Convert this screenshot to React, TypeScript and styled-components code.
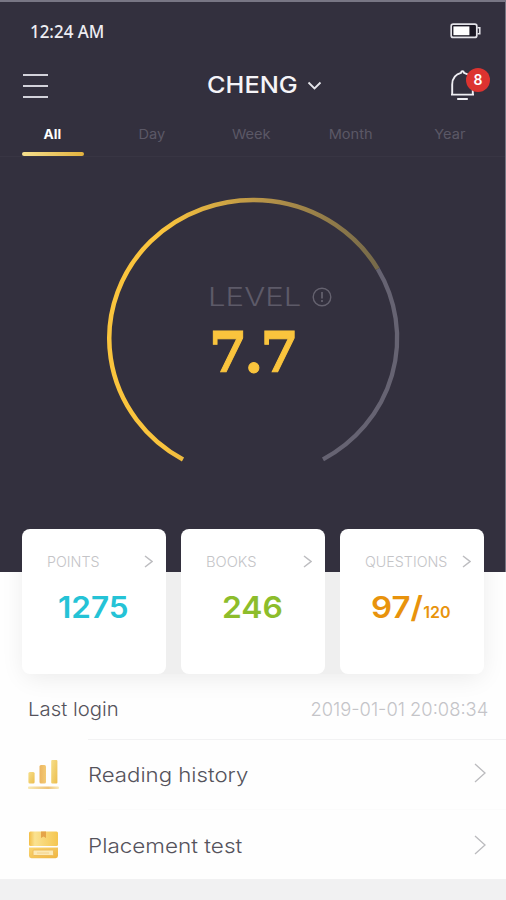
import React from 'react';
import styled, { createGlobalStyle } from 'styled-components';

const GlobalStyle = createGlobalStyle`
  * { box-sizing: border-box; }
  body { margin: 0; background: #f1f1f2; }
`;

const Screen = styled.div`
  width: 506px;
  height: 900px;
  overflow: hidden;
  background: #f1f1f2;
  font-family: Inter, "Liberation Sans", sans-serif;
`;

const Wide = styled.span<{ $x?: number; $origin?: string }>`
  display: inline-block;
  white-space: nowrap;
  transform: scaleX(${p => p.$x ?? 1});
  transform-origin: ${p => p.$origin ?? 'left'} center;
`;

const Hero = styled.header`
  height: 572px;
  background: #33303e;
  border-top: 2px solid #787684;
  border-right: 1px solid #777582;
`;

const StatusBar = styled.div`
  height: 58px;
  padding: 0 24px 0 30px;
  display: flex;
  align-items: center;
  justify-content: space-between;
  color: #eeedf2;
  font: 500 18px/24px "Noto Sans", sans-serif;
`;

const TitleBar = styled.div`
  height: 51px;
  padding: 0 15px 0 23px;
  display: grid;
  grid-template-columns: 60px 1fr 41px;
  align-items: center;
`;

const MenuButton = styled.button`
  width: 25px;
  height: 24px;
  padding: 0;
  border: 0;
  background: none;
  display: flex;
  flex-direction: column;
  justify-content: space-between;
`;

const MenuLine = styled.span`
  height: 2px;
  background: #d3d2da;
`;

const UserPicker = styled.div`
  display: flex;
  align-items: center;
  padding-left: 124px;
  color: #f5f4f8;
  font-size: 23px;
  line-height: 28px;
  font-weight: 500;
`;

const UserName = styled.span`
  width: 100px;
  margin-top: -2px;
`;

const Bell = styled.div`
  position: relative;
  width: 41px;
  height: 38px;
`;

const Badge = styled.span`
  position: absolute;
  top: 1px;
  right: 0;
  width: 24px;
  height: 24px;
  border-radius: 50%;
  background: #dc3330;
  color: #fff;
  font-size: 14px;
  line-height: 24px;
  font-weight: 600;
  text-align: center;
`;

const Tabs = styled.nav`
  height: 46px;
  padding: 0 5px 0 3px;
  display: grid;
  grid-template-columns: repeat(5, 1fr);
  border-bottom: 1px solid #383543;
`;

const Tab = styled.div<{ $active?: boolean }>`
  display: flex;
  flex-direction: column;
  align-items: center;
  justify-content: space-between;
  padding: 13px 0 0;
  font-size: 13px;
  line-height: 20px;
  font-weight: ${p => (p.$active ? 700 : 400)};
  color: ${p => (p.$active ? '#fff' : '#5b5866')};
`;

const TabMarker = styled.span`
  width: 62px;
  height: 4px;
  border-radius: 2px;
  background: linear-gradient(90deg, #f6e08e, #e3b23e);
`;

const Gauge = styled.section`
  display: grid;
  justify-items: center;
  padding: 35px 0 0 1px;

  > * { grid-area: 1 / 1; }
`;

const GaugeText = styled.div`
  width: 130px;
  padding-top: 89px;
`;

const LevelRow = styled.div`
  display: flex;
  align-items: center;
  margin-left: 20px;
  color: #5d5a68;
  font-size: 26px;
  line-height: 32px;
  font-weight: 300;

  svg { flex: none; }
`;

const LevelName = styled.span`
  width: 104px;
  flex: none;
`;

const LevelValue = styled.div`
  margin: 7px 0 0 21px;
  color: #fac43d;
  font: 700 56px/64px "DejaVu Serif", serif;
  letter-spacing: -3px;
  -webkit-text-stroke: 1px #fac43d;
`;

const Sheet = styled.main`
  display: flow-root;
  height: 307px;
  background: #fefefe;
`;

const Cards = styled.section`
  position: relative;
  display: grid;
  grid-template-columns: repeat(3, 144px);
  gap: 15px;
  padding-left: 22px;
`;

const Card = styled.article`
  height: 145px;
  padding: 21px 13px 0 25px;
  border-radius: 8px;
  background: #fff;
`;

/* Soft halo that only falls on the light sheet below the header. */
const CardShade = styled.div`
  position: absolute;
  inset: 43px 0 -40px 0;
  overflow: hidden;
  z-index: -1;

  &::before {
    content: "";
    position: absolute;
    left: 26px;
    top: -40px;
    width: 455px;
    height: 142px;
    border-radius: 8px;
    box-shadow: 0 2px 24px 2px rgba(0, 0, 0, 0.08);
    background: #efefef;
  }
`;

const CardsLayer = styled.div`
  position: relative;
  z-index: 0;
  margin-top: -43px;
`;

const CardHead = styled.div`
  height: 22px;
  display: flex;
  align-items: center;
  justify-content: space-between;
  color: #c4c4c7;
  font-size: 14px;
  font-weight: 300;
`;

const CardValue = styled.div<{ $color: string; $indent: number }>`
  margin: 15px 0 0 ${p => p.$indent}px;
  color: ${p => p.$color};
  display: flex;
  align-items: baseline;
  font-size: 30px;
  line-height: 40px;
  font-weight: 600;
`;

const Total = styled.span`
  margin-left: 5px;
  font-size: 16px;
`;

const LoginRow = styled.div`
  height: 65px;
  padding: 5px 18px 0 28px;
  display: flex;
  align-items: center;
  justify-content: space-between;
  font-size: 19px;
  font-weight: 300;
  color: #55535c;
`;

const LoginTime = styled.time`
  color: #c4c4c8;
`;

const Row = styled.div`
  height: 70px;
  display: grid;
  grid-template-columns: 60px 1fr;
  padding-left: 28px;
  align-items: center;
`;

const LastRow = styled(Row)`
  > svg { margin-top: 2px; }
`;

const RowBody = styled.div<{ $line: string; $drop?: number }>`
  height: 100%;
  padding: ${p => p.$drop ?? 0}px 20px 0 0;
  border-top: 1px solid ${p => p.$line};
  display: flex;
  align-items: center;
  justify-content: space-between;
  font-size: 20px;
  font-weight: 300;
  color: #55535c;

  svg { margin-top: -3px; }
`;

const BatteryIcon = () => (
  <svg width="31" height="16" viewBox="0 0 31 16">
    <rect x="1.2" y="1.2" width="25.6" height="13.2" rx="2" fill="#1b1824" stroke="#e4e3e9" strokeWidth="1.7" />
    <rect x="3.4" y="3.4" width="16" height="8.8" fill="#fff" />
    <path d="M27.5 4.8h2.3v6h-2.3" fill="none" stroke="#e4e3e9" strokeWidth="1.5" />
  </svg>
);

const BellIcon = () => (
  <svg width="28" height="34" viewBox="0 0 28 34">
    <path d="M2 27.6H25M3.2 27V17.5C3.2 11 7.2 7 12 5.8C12.3 3.7 14.7 3.7 15 5.8C19.8 7 23.8 11 23.8 17.5V27M8.2 32H18.8" fill="none" stroke="#efeef3" strokeWidth="1.9" />
  </svg>
);

const Chevron = ({ w, h, color, stroke = 1.5 }: { w: number; h: number; color: string; stroke?: number }) => (
  <svg width={w} height={h} viewBox={`0 0 ${w} ${h}`}>
    <path d={`M1 1L${w - 1} ${h / 2}L1 ${h - 1}`} fill="none" stroke={color} strokeWidth={stroke} />
  </svg>
);

const ChartIcon = () => (
  <svg width="32" height="32" viewBox="0 0 32 32">
    <defs>
      <linearGradient id="barA" x1="0" x2="1" y2="1"><stop stopColor="#f6df8b" /><stop offset="1" stopColor="#ecbd4d" /></linearGradient>
      <linearGradient id="barB" x1="0" x2="1"><stop stopColor="#ecb560" /><stop offset="1" stopColor="#f3ca75" /></linearGradient>
      <linearGradient id="base"><stop stopColor="#f8e9b2" /><stop offset=".65" stopColor="#efc277" /><stop offset="1" stopColor="#f9eab9" /></linearGradient>
    </defs>
    <rect x="0.4" y="14" width="6.2" height="11.6" rx="1.5" fill="url(#barA)" />
    <rect x="11.5" y="7" width="6.5" height="18.6" rx="1.5" fill="url(#barB)" />
    <rect x="23.2" y="2" width="6.2" height="23.6" rx="1" fill="url(#barA)" />
    <rect x="0" y="28.6" width="31" height="2.3" rx="1" fill="url(#base)" />
  </svg>
);

const BoxIcon = () => (
  <svg width="32" height="32" viewBox="0 0 32 32">
    <defs>
      <linearGradient id="lid"><stop stopColor="#f3bd45" /><stop offset=".2" stopColor="#fae291" /><stop offset="1" stopColor="#f5c64f" /></linearGradient>
      <linearGradient id="crate" x1="0" y1="0" x2="1" y2="1"><stop stopColor="#f9d572" /><stop offset="1" stopColor="#efb43f" /></linearGradient>
    </defs>
    <rect x="1" y="2.5" width="29" height="14.5" rx="1.5" fill="url(#lid)" />
    <path d="M13 2.5h5v6.5l-2.5-1.4L13 9z" fill="#e5a449" />
    <path d="M1 18.5h29v8.3q0 2.4-2.4 2.4H3.4Q1 29.2 1 26.8z" fill="url(#crate)" />
    <rect x="5" y="21" width="20.5" height="5.5" rx="1" fill="#fbe9b5" stroke="#efbd5c" />
    <path d="M9 24h12" stroke="#f4d28a" />
  </svg>
);

const GaugeArc = () => (
  <svg width="300" height="270" viewBox="0 0 300 270">
    <defs>
      <linearGradient id="arc" gradientUnits="userSpaceOnUse" x1="60" y1="80" x2="276" y2="80">
        <stop stopColor="#fac43d" />
        <stop offset=".45" stopColor="#b89448" />
        <stop offset="1" stopColor="#75694a" />
      </linearGradient>
    </defs>
    <path d="M274.7 76.8A144 138.5 0 0 1 220 267.4" fill="none" stroke="#666372" strokeWidth="4.3" />
    <path d="M80 267.4A144 138.5 0 1 1 274.7 76.8" fill="none" stroke="url(#arc)" strokeWidth="4.5" />
  </svg>
);

const InfoIcon = () => (
  <svg width="20" height="20" viewBox="0 0 20 20" fill="none" stroke="#65626f" strokeWidth="1.4">
    <circle cx="10" cy="10" r="8.8" />
    <path d="M10 5v6.5M10 13v2" strokeWidth="1.7" />
  </svg>
);

const tabs: [string, number][] = [['All', 1.05], ['Day', 1.12], ['Week', 1.12], ['Month', 1.12], ['Year', 1.12]];

const stats = [
  { label: 'POINTS', lx: 1.02, value: '1275', vx: 1.05, color: '#25c3d6', indent: 11 },
  { label: 'BOOKS', lx: 1.05, value: '246', vx: 1.06, color: '#8dbd2b', indent: 16 },
  { label: 'QUESTIONS', lx: 1.02, value: '97/', vx: 1.1, color: '#e8930c', indent: 6, total: '120' },
];

export default function App() {
  return (
    <Screen>
      <GlobalStyle />
      <Hero>
        <StatusBar>
          <Wide $x={0.94}>12:24 AM</Wide>
          <BatteryIcon />
        </StatusBar>
        <TitleBar>
          <MenuButton aria-label="Menu"><MenuLine /><MenuLine /><MenuLine /></MenuButton>
          <UserPicker>
            <UserName><Wide $x={1.1}>CHENG</Wide></UserName>
            <svg width="15" height="10" viewBox="0 0 15 10"><path d="M1.5 1.5l6 6 6-6" fill="none" stroke="#e6e5eb" strokeWidth="1.8" /></svg>
          </UserPicker>
          <Bell><BellIcon /><Badge>8</Badge></Bell>
        </TitleBar>
        <Tabs>
          {tabs.map(([name, x], i) => (
            <Tab key={name} $active={i === 0}>
              <Wide $x={x} $origin="center">{name}</Wide>
              {i === 0 && <TabMarker />}
            </Tab>
          ))}
        </Tabs>
        <Gauge>
          <GaugeArc />
          <GaugeText>
            <LevelRow><LevelName><Wide $x={1.2}>LEVEL</Wide></LevelName><InfoIcon /></LevelRow>
            <LevelValue><Wide $x={0.98}>7.7</Wide></LevelValue>
          </GaugeText>
        </Gauge>
      </Hero>
      <Sheet>
        <CardsLayer>
          <Cards>
            <CardShade />
            {stats.map(s => (
              <Card key={s.label}>
                <CardHead>
                  <Wide $x={s.lx}>{s.label}</Wide>
                  <Chevron w={9} h={13} color="#bdbdc0" />
                </CardHead>
                <CardValue $color={s.color} $indent={s.indent}>
                  <Wide $x={s.vx}>{s.value}</Wide>
                  {s.total && <Total>{s.total}</Total>}
                </CardValue>
              </Card>
            ))}
          </Cards>
        </CardsLayer>
        <LoginRow>
          <Wide $x={1.07}>Last login</Wide>
          <LoginTime><Wide $x={0.965} $origin="right">2019-01-01 20:08:34</Wide></LoginTime>
        </LoginRow>
        <Row>
          <ChartIcon />
          <RowBody $line="#f2f2f3"><Wide $x={1.11}>Reading history</Wide><Chevron w={12} h={20} color="#bbbbbe" stroke={1.3} /></RowBody>
        </Row>
        <LastRow>
          <BoxIcon />
          <RowBody $line="#fbfbfb" $drop={3}><Wide $x={1.125}>Placement test</Wide><Chevron w={12} h={20} color="#bbbbbe" stroke={1.3} /></RowBody>
        </LastRow>
      </Sheet>
    </Screen>
  );
}
